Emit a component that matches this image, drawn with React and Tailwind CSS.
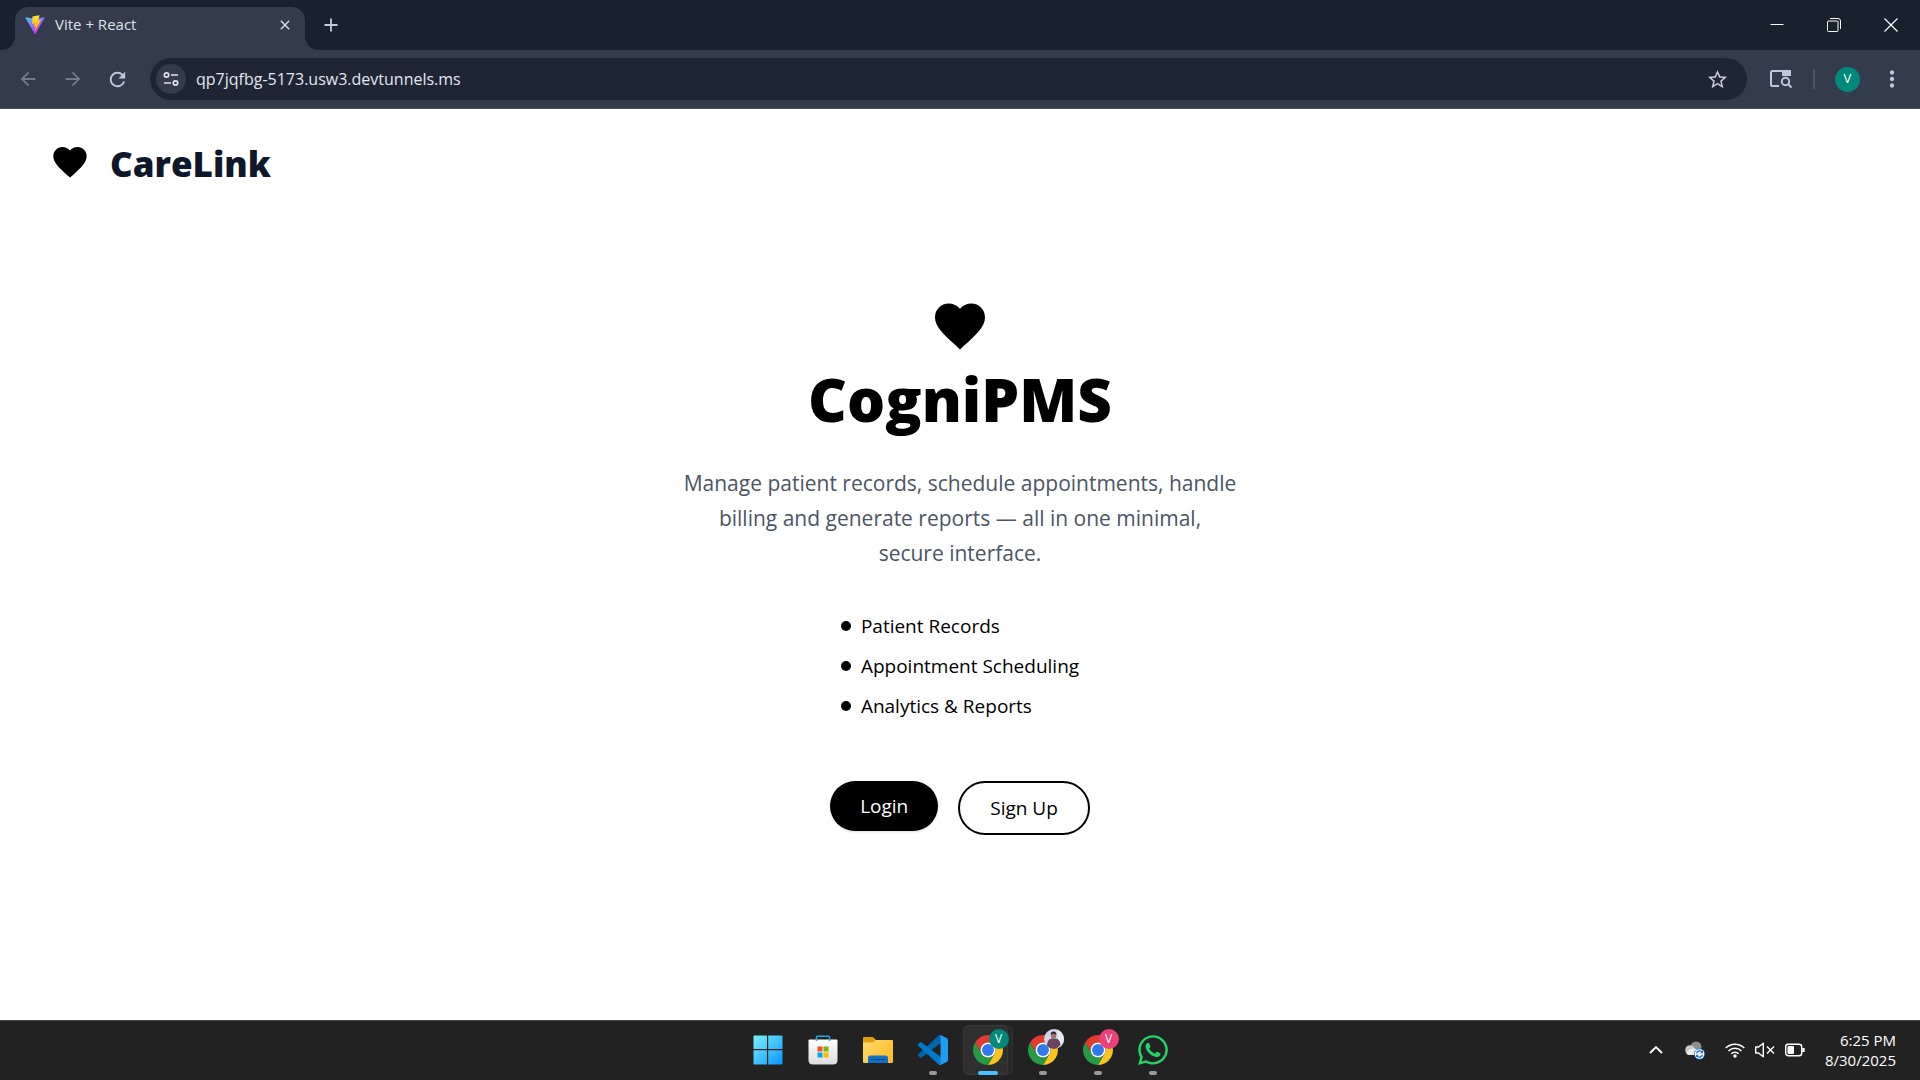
import { FaWhatsapp } from "react-icons/fa";
import {
  MdArrowBack,
  MdArrowForward,
  MdClose,
  MdFavorite,
  MdMoreVert,
  MdRefresh,
  MdStarBorder,
} from "react-icons/md";

const features = [
  "Patient Records",
  "Appointment Scheduling",
  "Analytics & Reports",
];

function ViteLogo() {
  return (
    <svg className="size-5" viewBox="0 0 410 404" fill="none">
      <path
        d="M399.641 59.5246L215.643 388.545C211.844 395.338 202.084 395.378 198.228 388.618L10.5817 59.5563C6.38087 52.1896 12.6802 43.2665 21.0281 44.7586L205.223 77.6824C206.398 77.8924 207.601 77.8904 208.776 77.6763L389.119 44.8058C397.439 43.2894 403.768 52.1434 399.641 59.5246Z"
        fill="url(#viteBody)"
      />
      <path
        d="M292.965 1.5744L156.801 28.2552C154.563 28.6937 152.906 30.5903 152.771 32.8664L144.395 174.33C144.198 177.662 147.258 180.248 150.51 179.498L188.42 170.749C191.967 169.931 195.172 173.055 194.443 176.622L183.18 231.775C182.422 235.487 185.907 238.661 189.532 237.56L212.947 230.446C216.577 229.344 220.065 232.527 219.297 236.242L201.398 322.875C200.278 328.294 207.486 331.249 210.492 326.603L212.5 323.5L323.454 102.072C325.312 98.3645 322.108 94.137 318.036 94.9228L279.014 102.454C275.347 103.161 272.227 99.746 273.262 96.1583L298.731 7.86689C299.767 4.27314 296.636 0.855181 292.965 1.5744Z"
        fill="url(#viteBolt)"
      />
      <defs>
        <linearGradient id="viteBody" x1="6" y1="33" x2="235" y2="344" gradientUnits="userSpaceOnUse">
          <stop stopColor="#41D1FF" />
          <stop offset="1" stopColor="#BD34FE" />
        </linearGradient>
        <linearGradient id="viteBolt" x1="195" y1="9" x2="236" y2="293" gradientUnits="userSpaceOnUse">
          <stop stopColor="#FFEA83" />
          <stop offset="0.083" stopColor="#FFDD35" />
          <stop offset="1" stopColor="#FFA800" />
        </linearGradient>
      </defs>
    </svg>
  );
}

function TuneIcon() {
  return (
    <svg className="size-4" viewBox="0 0 16 16" fill="none" stroke="currentColor" strokeWidth="1.7">
      <circle cx="3.5" cy="4" r="2.2" />
      <path d="M8 4h7M1 12h7" />
      <circle cx="12.5" cy="12" r="2.2" />
    </svg>
  );
}

function SidePanelSearchIcon() {
  return (
    <svg className="h-[20px] w-[22px]" viewBox="0 0 22 20" fill="none" stroke="currentColor" strokeWidth="2">
      <path d="M9 17H2.500Q1 17 1 15.500V3.500Q1 2 2.500 2H20V7" />
      <path d="M12 1H20Q21 1 21 2V7H12Z" fill="currentColor" stroke="none" />
      <circle cx="15.500" cy="12.500" r="3.700" />
      <path d="M18 15L21.500 18.500" />
    </svg>
  );
}

function BrowserTabs() {
  return (
    <div className="flex h-[50px] text-[#dfe2ea]">
      <div className="w-[15px] rounded-br-[14px] bg-[#18212e]" />
      <div className="bg-[#18212e] pt-[7px]">
        <div className="flex h-[43px] w-[290px] items-center rounded-t-[13px] bg-[#333b4c] pr-2 pb-2 pl-[10px]">
          <ViteLogo />
          <span className="ml-[10px] flex-1 text-[15px]">Vite + React</span>
          <button type="button" aria-label="Close tab" className="flex size-6 items-center justify-center">
            <MdClose className="size-4" />
          </button>
        </div>
      </div>
      <div className="flex flex-1 items-center justify-between rounded-bl-[14px] bg-[#18212e] pr-px">
        <button type="button" aria-label="New tab" className="flex h-[50px] w-[52px] items-center justify-center text-[#c5cbe0]">
          <svg className="size-[14px]" viewBox="0 0 14 14" stroke="currentColor" strokeWidth="1.8">
            <path d="M7 0.500V13.500M0.500 7H13.500" />
          </svg>
        </button>
        <div className="flex text-white">
          <button type="button" aria-label="Minimize" className="flex h-12 w-[57px] items-center justify-center">
            <svg className="size-[14px]" viewBox="0 0 14 14" stroke="currentColor">
              <path d="M0.500 6.500H13.500" />
            </svg>
          </button>
          <button type="button" aria-label="Restore" className="flex h-12 w-[57px] items-center justify-center">
            <svg className="size-[14px]" viewBox="0 0 14 14" fill="none" stroke="currentColor">
              <rect x="0.500" y="3" width="10.500" height="10.500" rx="1" />
              <path d="M3 0.500H11Q13.500 0.500 13.500 3V11" />
            </svg>
          </button>
          <button type="button" aria-label="Close" className="flex h-12 w-[57px] items-center justify-center">
            <svg className="size-[14px]" viewBox="0 0 14 14" stroke="currentColor" strokeWidth="1.200">
              <path d="M0.500 0.500L13.500 13.500M13.500 0.500L0.500 13.500" />
            </svg>
          </button>
        </div>
      </div>
    </div>
  );
}

function BrowserToolbar() {
  return (
    <div className="flex h-[59px] items-center border-b border-[#4a4f5c] pl-[5px] text-[#bfc7de]">
      <button type="button" aria-label="Back" className="flex h-10 w-[45px] items-center justify-center text-[#727988]">
        <MdArrowBack className="size-[22px]" />
      </button>
      <button type="button" aria-label="Forward" className="flex h-10 w-[45px] items-center justify-center text-[#727988]">
        <MdArrowForward className="size-[22px]" />
      </button>
      <button type="button" aria-label="Reload" className="flex h-10 w-[45px] items-center justify-center">
        <MdRefresh className="size-[23px]" />
      </button>
      <div className="ml-[10px] flex h-[42px] flex-1 items-center rounded-full bg-[#1e2636] px-[6px]">
        <button
          type="button"
          aria-label="Site information"
          className="flex size-[30px] items-center justify-center rounded-full bg-[#333b4c] text-[#dfe2ea]"
        >
          <TuneIcon />
        </button>
        <input
          aria-label="Address"
          defaultValue="qp7jqfbg-5173.usw3.devtunnels.ms"
          className="ml-[10px] flex-1 bg-transparent text-[16px] text-[#e3e6ee] outline-none"
        />
        <button type="button" aria-label="Bookmark" className="mr-[9px] flex size-[30px] items-center justify-center text-[#c8cad0]">
          <MdStarBorder className="size-[23px]" />
        </button>
      </div>
      <button type="button" aria-label="Search side panel" className="ml-[18px] flex h-10 w-8 items-center justify-center">
        <SidePanelSearchIcon />
      </button>
      <div className="ml-4 h-5 w-[2px] bg-[#4b5468]" />
      <button
        type="button"
        aria-label="Profile"
        className="ml-5 flex size-[25px] items-center justify-center rounded-full bg-[#00897b] text-[13px] text-white"
      >
        V
      </button>
      <button type="button" aria-label="Menu" className="mr-3 ml-4 flex h-10 w-8 items-center justify-center">
        <MdMoreVert className="size-[26px]" />
      </button>
    </div>
  );
}

function HomePage() {
  return (
    <div className="flex-1 bg-white">
      <header className="flex items-start gap-5 px-[50px] pt-[33px]">
        <MdFavorite className="size-10 text-black" />
        <span className="text-[35px] leading-[44px] font-extrabold text-[#0f172a]">CareLink</span>
      </header>

      <main className="flex flex-col items-center pt-[110px] text-black">
        <MdFavorite className="size-[60px]" />
        <h1 className="mt-[13px] text-[60px] leading-[60px] font-extrabold">CogniPMS</h1>
        <p className="mt-[37px] max-w-[600px] text-center text-[21px] leading-[35px] text-[#4b5563]">
          Manage patient records, schedule appointments, handle
          <br />
          billing and generate reports — all in one minimal,
          <br />
          secure interface.
        </p>

        <ul className="mt-[40px] space-y-[10px]">
          {features.map((feature) => (
            <li key={feature} className="flex items-center gap-[10px] text-[19px] leading-[30px]">
              <span className="size-[10px] rounded-full bg-black" />
              {feature}
            </li>
          ))}
        </ul>

        <div className="mt-[60px] flex items-start gap-5 text-[19px] leading-[30px]">
          <button type="button" className="rounded-full bg-black px-[30px] py-[10px] text-white shadow-sm">
            Login
          </button>
          <button type="button" className="rounded-full border-2 border-black px-[30px] py-[10px]">
            Sign Up
          </button>
        </div>
      </main>
    </div>
  );
}

function StartIcon() {
  return (
    <svg className="size-[30px]" viewBox="0 0 30 30">
      <defs>
        <linearGradient id="startFill" x1="0" y1="0" x2="30" y2="30" gradientUnits="userSpaceOnUse">
          <stop stopColor="#7df3ff" />
          <stop offset="1" stopColor="#0a93fa" />
        </linearGradient>
      </defs>
      <path
        d="M1.500 0.500H14V14H0.500V1.500Q0.500 0.500 1.500 0.500ZM15.200 0.500H28.500Q29.500 0.500 29.500 1.500V14H15.200ZM0.500 15.200H14V29.500H1.500Q0.500 29.500 0.500 28.500ZM15.200 15.200H29.500V28.500Q29.500 29.500 28.500 29.500H15.200Z"
        fill="url(#startFill)"
      />
    </svg>
  );
}

function StoreIcon() {
  return (
    <svg className="size-[30px]" viewBox="0 0 30 30">
      <defs>
        <linearGradient id="bagFill" x1="0" y1="4" x2="0" y2="30" gradientUnits="userSpaceOnUse">
          <stop stopColor="#ffffff" />
          <stop offset="1" stopColor="#dcdcdc" />
        </linearGradient>
      </defs>
      <path d="M0.500 5.500Q0.500 4.500 1.500 4.500H28.500Q29.500 4.500 29.500 5.500V25Q29.500 29.500 25 29.500H5Q0.500 29.500 0.500 25Z" fill="url(#bagFill)" />
      <path d="M8.500 6V2.200Q8.500 1.200 9.500 1.200H20.500Q21.500 1.200 21.500 2.200V6" fill="none" stroke="#1fa9e0" strokeWidth="1.600" />
      <rect x="9.500" y="11.500" width="5" height="5" fill="#f25022" />
      <rect x="15.500" y="11.500" width="5" height="5" fill="#7fba00" />
      <rect x="9.500" y="17.500" width="5" height="5" fill="#00a4ef" />
      <rect x="15.500" y="17.500" width="5" height="5" fill="#ffb900" />
    </svg>
  );
}

function ExplorerIcon() {
  return (
    <svg className="size-[30px]" viewBox="0 0 30 30">
      <defs>
        <linearGradient id="folderFill" x1="0" y1="4" x2="30" y2="30" gradientUnits="userSpaceOnUse">
          <stop stopColor="#ffdc73" />
          <stop offset="1" stopColor="#fdb71a" />
        </linearGradient>
      </defs>
      <path d="M0 3Q0 2 1 2H9Q10 2 11 3L13 5V10H0Z" fill="#e39d08" />
      <path d="M0 7.500H9Q10 7.500 11 6.500L12.500 5H29Q30 5 30 6V27Q30 28 29 28H1Q0 28 0 27Z" fill="url(#folderFill)" />
      <path d="M5 28V23Q5 20.500 7.500 20.500H22.500Q25 20.500 25 23V28Z" fill="#0f72c9" />
      <path d="M8 24.500H22" stroke="#0a4a8c" strokeWidth="1.200" />
    </svg>
  );
}

function VSCodeIcon() {
  return (
    <svg className="size-[30px]" viewBox="0 0 100 100">
      <path
        fill="#0065A9"
        d="M96.4614 10.7962L75.8569 0.875542C73.4719 -0.272773 70.6217 0.211611 68.75 2.08333L1.29858 63.5832C-0.515693 65.2373 -0.513607 68.0937 1.30308 69.7452L6.81272 74.7541C8.29793 76.1042 10.5347 76.2035 12.1338 74.9905L93.3609 13.3699C96.086 11.3026 100 13.2462 100 16.6667V16.4275C100 14.0265 98.6246 11.8378 96.4614 10.7962Z"
      />
      <path
        fill="#007ACC"
        d="M96.4614 89.2038L75.8569 99.1245C73.4719 100.273 70.6217 99.7884 68.75 97.9167L1.29858 36.4169C-0.515693 34.7627 -0.513607 31.9063 1.30308 30.2548L6.81272 25.2459C8.29793 23.8958 10.5347 23.7965 12.1338 25.0095L93.3609 86.6301C96.086 88.6974 100 86.7538 100 83.3334V83.5726C100 85.9735 98.6246 88.1622 96.4614 89.2038Z"
      />
      <path
        fill="#1F9CF0"
        d="M75.8578 99.1263C73.4721 100.274 70.6219 99.7885 68.75 97.9166C71.0564 100.223 75 98.5895 75 95.3278V4.67213C75 1.41039 71.0564 -0.223106 68.75 2.08329C70.6219 0.211402 73.4721 -0.273666 75.8578 0.873633L96.4587 10.7807C98.6234 11.8217 100 14.0112 100 16.4132V83.5871C100 85.9891 98.6234 88.1786 96.4586 89.2196L75.8578 99.1263Z"
      />
    </svg>
  );
}

function ChromeIcon({ children }) {
  return (
    <span className="relative">
      <svg className="size-[30px]" viewBox="0 0 48 48">
        <path fill="#e33b2e" d="M24 12H44.780A24 24 0 0 0 3.220 12L13.610 30A12 12 0 0 1 24 12Z" />
        <path fill="#fcc31e" d="M34.390 30L24 48A24 24 0 0 0 44.780 12H24A12 12 0 0 1 34.390 30Z" />
        <path fill="#269a45" d="M13.610 30L3.220 12A24 24 0 0 0 24 48L34.390 30A12 12 0 0 1 13.610 30Z" />
        <circle cx="24" cy="24" r="12" fill="#fff" />
        <circle cx="24" cy="24" r="9.500" fill="#2f79ee" />
      </svg>
      <span className="absolute -top-[6px] -right-[6px] flex size-5 items-center justify-center overflow-hidden rounded-full">
        {children}
      </span>
    </span>
  );
}

function ProfilePhoto() {
  return (
    <svg className="size-5" viewBox="0 0 20 20">
      <rect width="20" height="20" fill="#cfd4e6" />
      <path d="M13 0H20V20H15Z" fill="#e8eaf2" />
      <path d="M3 20Q2 10 8 9.500H11.500Q16 10 16.500 16L13 19V20Z" fill="#6d4260" />
      <ellipse cx="9.500" cy="6.500" rx="2.600" ry="3.500" fill="#9a7470" />
      <path d="M6.700 6Q6.500 2.500 9.500 2.500T12.400 6Q11 4.500 9.500 4.500T6.700 6Z" fill="#262433" />
    </svg>
  );
}

function TaskbarItem({ label, running = false, active = false, children }) {
  return (
    <button
      type="button"
      aria-label={label}
      className="flex h-full w-[55px] items-center justify-center"
    >
      <span
        className={`relative flex h-[50px] w-[50px] items-center justify-center rounded-md ${
          active ? "bg-[#292929] ring-1 ring-[#333333] ring-inset" : ""
        }`}
      >
        {/* front card of the grouped windows */}
        {active && (
          <span className="absolute inset-y-0 left-0 w-[45px] rounded-md border border-[#3a3a3a] bg-[#2f2f2f]" />
        )}
        {children}
        {running && (
          <span
            className={`absolute bottom-0 h-1 rounded-full ${
              active ? "w-5 bg-[#4cc2ff]" : "w-2 bg-[#9a9a9a]"
            }`}
          />
        )}
      </span>
    </button>
  );
}

function SystemTray() {
  return (
    <div className="flex items-center justify-end pr-6 text-white">
      <button type="button" aria-label="Show hidden icons" className="mr-[22px]">
        <svg className="h-[10px] w-[14px]" viewBox="0 0 14 10" fill="none" stroke="currentColor" strokeWidth="1.800">
          <path d="M1 8L7 2L13 8" />
        </svg>
      </button>
      <svg className="mr-5 size-5" viewBox="0 0 20 20">
        <circle cx="11" cy="7" r="5.500" fill="#8d8d8d" />
        <circle cx="5" cy="10" r="4.800" fill="#c9c9c9" />
        <path d="M1.500 13Q3 9 8 8.500Q13 8.500 15 12V15H4Q2 15 1.500 13Z" fill="#ececec" />
        <circle cx="14.500" cy="14" r="5.500" fill="#1673c7" />
        <circle cx="14.500" cy="14" r="4.800" fill="#fff" />
        <path d="M11.500 13.200A3.200 3.200 0 0 1 17 12M17.500 14.800A3.200 3.200 0 0 1 12 16" fill="none" stroke="#1673c7" strokeWidth="1.400" />
        <path d="M18 10.500V13.300H15.200ZM11 17.500V14.700H13.800Z" fill="#1673c7" />
      </svg>
      <svg className="mr-[10px] h-4 w-5" viewBox="0 0 20 16" fill="none" stroke="currentColor" strokeWidth="1.500">
        <path d="M0.700 6A13.200 13.200 0 0 1 19.300 6M3.500 9A9.200 9.200 0 0 1 16.500 9M6.300 11.800A5.200 5.200 0 0 1 13.700 11.800" />
        <circle cx="10" cy="14" r="1.800" fill="currentColor" stroke="none" />
      </svg>
      <svg className="mr-[10px] h-4 w-5" viewBox="0 0 20 16" fill="none" stroke="currentColor" strokeWidth="1.400">
        <path d="M0.700 5H3.500L8.300 1.200V14.800L3.500 11H0.700Z" strokeLinejoin="round" />
        <path d="M12 4.500L19 11.500M19 4.500L12 11.500" />
      </svg>
      <svg className="mr-5 h-4 w-5" viewBox="0 0 20 16" fill="none" stroke="currentColor" strokeWidth="1.400">
        <rect x="0.700" y="2.200" width="16" height="11.600" rx="2.500" />
        <rect x="2.500" y="4" width="6.500" height="8" rx="1" fill="currentColor" stroke="none" />
        <path d="M18.500 6V10" strokeWidth="2.400" />
      </svg>
      <div className="text-right text-[15px] leading-5">
        <div>6:25 PM</div>
        <div>8/30/2025</div>
      </div>
    </div>
  );
}

function Taskbar() {
  return (
    <footer className="grid h-[60px] grid-cols-[1fr_auto_1fr] border-t border-[#464646] bg-[#222222] pb-[2px]">
      <div />
      <div className="flex">
        <TaskbarItem label="Start">
          <StartIcon />
        </TaskbarItem>
        <TaskbarItem label="Microsoft Store">
          <StoreIcon />
        </TaskbarItem>
        <TaskbarItem label="File Explorer">
          <ExplorerIcon />
        </TaskbarItem>
        <TaskbarItem label="Visual Studio Code" running>
          <VSCodeIcon />
        </TaskbarItem>
        <TaskbarItem label="Chrome" running active>
          <ChromeIcon>
            <span className="flex size-full items-center justify-center bg-[#00897b] text-[12px] text-white">V</span>
          </ChromeIcon>
        </TaskbarItem>
        <TaskbarItem label="Chrome, second profile" running>
          <ChromeIcon>
            <ProfilePhoto />
          </ChromeIcon>
        </TaskbarItem>
        <TaskbarItem label="Chrome, third profile" running>
          <ChromeIcon>
            <span className="flex size-full items-center justify-center bg-[#ec407a] text-[12px] text-white">V</span>
          </ChromeIcon>
        </TaskbarItem>
        <TaskbarItem label="WhatsApp" running>
          <FaWhatsapp className="size-[34px] text-[#25d366]" />
        </TaskbarItem>
      </div>
      <SystemTray />
    </footer>
  );
}

export default function App() {
  return (
    <div className="flex min-h-screen flex-col font-['Open_Sans','Noto_Sans',sans-serif]">
      <div className="bg-[#333b4c]">
        <BrowserTabs />
        <BrowserToolbar />
      </div>
      <HomePage />
      <Taskbar />
    </div>
  );
}
